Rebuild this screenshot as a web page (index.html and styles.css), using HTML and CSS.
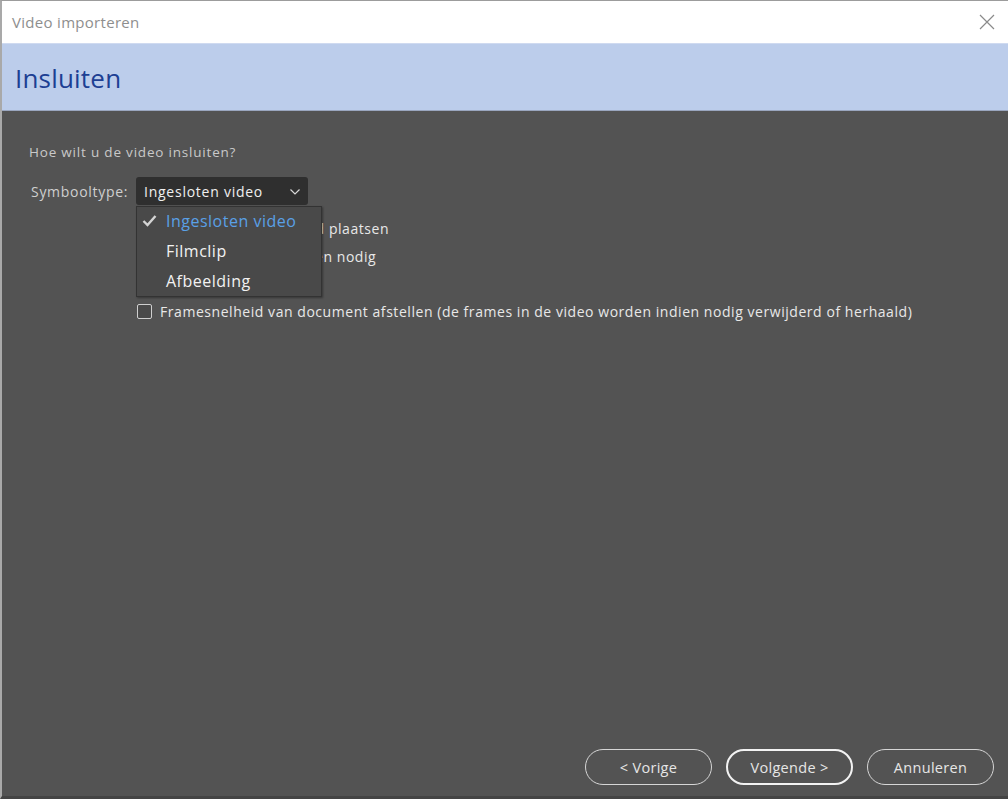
FILE: index.html
```html
<!DOCTYPE html>
<html lang="nl">
<head>
<meta charset="utf-8">
<title>Video importeren</title>
<link rel="stylesheet" href="styles.css">
</head>
<body>
<div class="window">
  <div class="titlebar">
    <span class="title">Video importeren</span>
    <svg class="close" width="16" height="16" viewBox="0 0 16 16"><path d="M1 1 L15 15 M15 1 L1 15" stroke="#8a8a8a" stroke-width="1.2" fill="none"/></svg>
  </div>
  <div class="header"><h1>Insluiten</h1></div>
  <div class="content">
    <div class="main">
      <p class="question">Hoe wilt u de video insluiten?</p>
      <div class="symrow">
        <span class="symlabel">Symbooltype:</span>
        <div class="selectwrap">
          <div class="select">
            <span>Ingesloten video</span>
            <svg class="chev" width="10" height="6" viewBox="0 0 10 6"><path d="M0.5 0.5 L5 5 L9.5 0.5" stroke="#d8d8d8" stroke-width="1.2" fill="none"/></svg>
          </div>
          <div class="menu">
            <div class="item selected">
              <svg class="check" width="15" height="13" viewBox="0 0 15 13"><path d="M1.5 7 L5.5 11 L13.5 2" stroke="#d4d4d4" stroke-width="2.4" fill="none"/></svg>
              <span>Ingesloten video</span>
            </div>
            <div class="item"><span>Filmclip</span></div>
            <div class="item"><span>Afbeelding</span></div>
          </div>
        </div>
      </div>
      <div class="options">
        <label class="opt"><span class="box"></span><span>Instantie in werkgebied plaatsen</span></label>
        <label class="opt"><span class="box"></span><span>Tijdlijn uitbreiden indien nodig</span></label>
        <label class="opt"><span class="box"></span><span>Audio opnemen</span></label>
        <label class="opt"><span class="box"></span><span>Framesnelheid van document afstellen (de frames in de video worden indien nodig verwijderd of herhaald)</span></label>
      </div>
    </div>
    <div class="footer">
      <button class="btn">&lt; Vorige</button>
      <button class="btn primary">Volgende &gt;</button>
      <button class="btn">Annuleren</button>
    </div>
  </div>
</div>
</body>
</html>
```
FILE: styles.css
```css
* { box-sizing: border-box; }
html, body { margin: 0; padding: 0; }
body {
  width: 1008px;
  height: 799px;
  overflow: hidden;
  background: #535353;
  font-family: "Open Sans", "Noto Sans", sans-serif;
}
.window {
  width: 1008px;
  height: 799px;
  display: flex;
  flex-direction: column;
  border-top: 1px solid #9c9c9c;
  border-left: 2px solid #a9a9a9;
  border-bottom: 3px solid #444;
}
.titlebar {
  height: 42px;
  background: #fff;
  display: flex;
  align-items: center;
  justify-content: space-between;
  padding: 0 13px 0 10px;
  flex: none;
}
.title {
  font-size: 15px;
  color: #8e8e8e;
  letter-spacing: 0.3px;
}
.close { display: block; }
.header {
  height: 68px;
  flex: none;
  background: #bccdeb;
  border-top: 1px solid #cfdaf0;
  border-bottom: 1px solid #9aa6bf;
  display: flex;
  align-items: center;
  padding-left: 13px;
}
.header h1 {
  margin: 0;
  font-weight: 400;
  font-size: 26px;
  color: #1d3f93;
  letter-spacing: 0.2px;
  padding-top: 2px;
}
.content {
  flex: 1;
  display: flex;
  flex-direction: column;
  justify-content: space-between;
  background: #535353;
}
.main {
  padding: 32px 0 0 27px;
}
.question {
  margin: 0;
  font-size: 13.5px;
  color: #c9c9c9;
  line-height: 18px;
  letter-spacing: 0.8px;
}
.symrow {
  display: flex;
  align-items: center;
  margin-top: 16px;
  height: 28px;
}
.symlabel {
  font-size: 14px;
  color: #cfcfcf;
  width: 107px;
  padding-left: 2px;
  letter-spacing: 0.7px;
}
.selectwrap { position: relative; }
.select {
  width: 172px;
  height: 28px;
  background: #2f2f2f;
  border-radius: 3px;
  display: flex;
  align-items: center;
  justify-content: space-between;
  padding: 0 8px 0 8px;
  font-size: 14px;
  color: #f0f0f0;
  letter-spacing: 0.75px;
}
.chev { margin-top: 1px; }
.menu {
  position: absolute;
  left: 0;
  top: 29px;
  width: 186px;
  height: 91px;
  background: #494949;
  border: 1px solid #333;
  box-shadow: 1px 1px 2px rgba(0,0,0,0.35);
  padding-top: 0;
  z-index: 5;
}
.item {
  height: 30px;
  display: flex;
  align-items: center;
  padding-left: 29px;
  padding-bottom: 2px;
  position: relative;
  font-size: 16px;
  color: #f2f2f2;
  letter-spacing: 0.5px;
}
.item.selected { color: #5aa0e6; }
.check { position: absolute; left: 5px; top: 7px; }
.options {
  margin-top: 9px;
  padding-left: 108px;
  display: flex;
  flex-direction: column;
}
.opt {
  display: flex;
  align-items: center;
  height: 28px;
  font-size: 14px;
  color: #e8e8e8;
  letter-spacing: 0.55px;
}
.opt:last-child { height: 27px; padding-bottom: 1px; }
.box {
  width: 15px;
  height: 15px;
  border: 1px solid #cfcfcf;
  border-radius: 2px;
  background: #4a4a4a;
  margin-right: 8px;
  flex: none;
}
.footer {
  display: flex;
  justify-content: flex-end;
  gap: 14px;
  padding: 0 14px 11px 0;
}
.btn {
  width: 127px;
  height: 36px;
  border-radius: 18px;
  background: transparent;
  border: 1.5px solid #d6d6d6;
  color: #e6e6e6;
  font-family: "Open Sans", "Noto Sans", sans-serif;
  font-size: 14.5px;
  letter-spacing: 0.3px;
  padding: 0;
}
.btn.primary {
  border: 2.5px solid #f2f2f2;
}
```
